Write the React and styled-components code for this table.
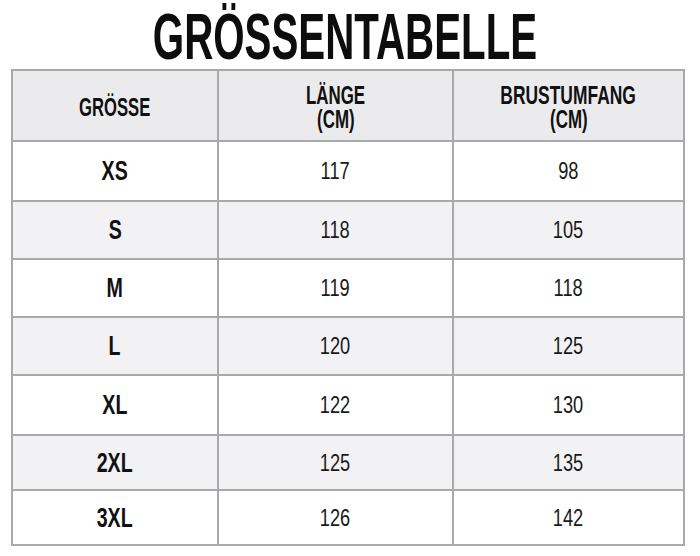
import React from "react";
import styled, { createGlobalStyle } from "styled-components";

const Global = createGlobalStyle`
  html, body { margin: 0; padding: 0; background: #ffffff; }
  body { font-family: "Liberation Sans", Arial, sans-serif; color: #111; }
`;

const Page = styled.div`
  width: 700px;
  height: 556px;
  padding-top: 5px;
  box-sizing: border-box;
  display: flex;
  flex-direction: column;
  align-items: flex-start;
`;

const Title = styled.h1`
  margin: 0;
  width: 700px;
  height: 64px;
  text-align: center;
  font-size: 65px;
  line-height: 64px;
  font-weight: 700;
  color: #0d0d0d;
  padding-right: 10px;
  box-sizing: border-box;
`;

const Squeeze = styled.span`
  display: inline-block;
  white-space: nowrap;
  transform: scaleX(${(p) => p.$sx});
  transform-origin: center;
`;

const Table = styled.div`
  margin-left: 11px;
  display: grid;
  grid-template-columns: 204px 233px 229px;
  grid-template-rows: 69px 58px 56px 56px 56px 58px 53px 53px;
  gap: 2px;
  padding: 2px;
  background: #a9a9ab;
`;

const Cell = styled.div`
  background: ${(p) => p.$bg};
  display: flex;
  align-items: center;
  justify-content: center;
  text-align: center;
  color: #111;
`;

const HeadText = styled.div`
  font-size: 26px;
  line-height: 24px;
  font-weight: 700;
  padding-top: ${(p) => (p.$two ? "3px" : "2px")};
`;

const SizeText = styled.div`
  font-size: 28px;
  line-height: 30px;
  font-weight: 700;
`;

const NumText = styled.div`
  font-size: 24px;
  line-height: 28px;
  font-weight: 400;
  color: #1a1a1a;
`;

const rows = [
  ["XS", "117", "98"],
  ["S", "118", "105"],
  ["M", "119", "118"],
  ["L", "120", "125"],
  ["XL", "122", "130"],
  ["2XL", "125", "135"],
  ["3XL", "126", "142"],
];

const HEAD_BG = "#ebebed";
const GRAY = "#f2f2f4";
const WHITE = "#ffffff";

export default function App() {
  return (
    <>
      <Global />
      <Page>
        <Title>
          <Squeeze $sx={0.62}>GRÖSSENTABELLE</Squeeze>
        </Title>
        <Table>
          <Cell $bg={HEAD_BG}>
            <HeadText>
              <Squeeze $sx={0.64}>GRÖSSE</Squeeze>
            </HeadText>
          </Cell>
          <Cell $bg={HEAD_BG}>
            <HeadText $two>
              <Squeeze $sx={0.65}>LÄNGE</Squeeze>
              <br />
              <Squeeze $sx={0.65}>(CM)</Squeeze>
            </HeadText>
          </Cell>
          <Cell $bg={HEAD_BG}>
            <HeadText $two>
              <Squeeze $sx={0.67}>BRUSTUMFANG</Squeeze>
              <br />
              <Squeeze $sx={0.65}>(CM)</Squeeze>
            </HeadText>
          </Cell>
          {rows.map((r, i) => {
            const bg = i % 2 === 0 ? WHITE : GRAY;
            return (
              <React.Fragment key={r[0]}>
                <Cell $bg={bg}>
                  <SizeText>
                    <Squeeze $sx={0.7}>{r[0]}</Squeeze>
                  </SizeText>
                </Cell>
                <Cell $bg={bg}>
                  <NumText>
                    <Squeeze $sx={0.76}>{r[1]}</Squeeze>
                  </NumText>
                </Cell>
                <Cell $bg={bg}>
                  <NumText>
                    <Squeeze $sx={0.76}>{r[2]}</Squeeze>
                  </NumText>
                </Cell>
              </React.Fragment>
            );
          })}
        </Table>
      </Page>
    </>
  );
}
